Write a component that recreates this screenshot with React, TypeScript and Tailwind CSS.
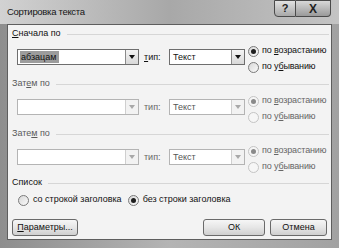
import React from "react";

function Combo({
  width,
  value,
  selected,
  disabled,
}: {
  width: string;
  value?: string;
  selected?: boolean;
  disabled?: boolean;
}) {
  return (
    <div
      className={`${width} h-[16px] flex items-stretch border ${
        disabled ? "border-[#b4b4b4]" : "border-[#6e6e6e]"
      } bg-white`}
    >
      <div className="flex-1 flex items-center pl-[2px] overflow-hidden">
        {value && (
          <span
            className={`leading-[12px] px-[1px] ${
              selected ? "bg-[#9c9c9c] text-[#111] pr-[3px]" : disabled ? "text-[#555]" : "text-[#111]"
            }`}
          >
            {value}
          </span>
        )}
      </div>
      <div
        className={`w-[13px] flex items-center justify-center border-l ${
          disabled
            ? "border-[#cfcfcf] bg-[#f2f2f2]"
            : "border-[#8a8a8a] bg-gradient-to-b from-[#f4f4f4] to-[#d8d8d8]"
        }`}
      >
        <span
          className={`w-0 h-0 border-l-[3px] border-r-[3px] border-t-[4px] border-l-transparent border-r-transparent ${
            disabled ? "border-t-[#a8a8a8]" : "border-t-[#111]"
          }`}
        />
      </div>
    </div>
  );
}

function Radio({ checked, disabled }: { checked?: boolean; disabled?: boolean }) {
  return (
    <span
      className={`shrink-0 w-[11px] h-[11px] rounded-full border flex items-center justify-center ${
        disabled ? "border-[#c4c4c4] bg-[#f6f6f6]" : "border-[#7a7a7a] bg-gradient-to-br from-[#d8d8d8] to-[#fafafa]"
      }`}
    >
      {checked && (
        <span
          className={`w-[5px] h-[5px] rounded-full ${disabled ? "bg-[#8a8a8a]" : "bg-[#1e1e1e]"}`}
        />
      )}
    </span>
  );
}

function SectionLabel({ children, disabled }: { children: React.ReactNode; disabled?: boolean }) {
  return (
    <div className="flex items-center h-[14px] pl-[4px] pr-[2px]">
      <span className={`whitespace-nowrap ${disabled ? "text-[#5a5a5a]" : "text-[#111]"}`}>{children}</span>
      <div className="flex-1 ml-[6px] h-px bg-[#d6d6d6]" />
    </div>
  );
}

function SortRow({
  first,
  value,
  disabled,
}: {
  first: React.ReactNode;
  value?: string;
  disabled?: boolean;
}) {
  const txt = disabled ? "text-[#666]" : "text-[#111]";
  return (
    <div className="flex items-start h-[36px]">
      <div className="mt-[8px] ml-[9px]">
        <Combo width="w-[122px]" value={value} selected={!!value} disabled={disabled} />
      </div>
      <span className={`mt-[10px] ml-[5px] w-[25px] ${txt}`}>{first}</span>
      <div className="mt-[8px]">
        <Combo width="w-[76px]" value="Текст" disabled={disabled} />
      </div>
      <div className="ml-[3px] mt-[2px] flex flex-col whitespace-nowrap tracking-[-0.15px]">
        <div className="flex items-center h-[16px] gap-[3px]">
          <Radio checked disabled={disabled} />
          <span className={txt}>
            по <span className="underline">в</span>озрастанию
          </span>
        </div>
        <div className="flex items-center h-[16px] gap-[3px]">
          <Radio disabled={disabled} />
          <span className={txt}>
            по у<span className="underline">б</span>ыванию
          </span>
        </div>
      </div>
    </div>
  );
}

function Button({ width, children }: { width: string; children: React.ReactNode }) {
  return (
    <button
      className={`${width} h-[17px] rounded-[3px] border border-[#6a6a6a] bg-gradient-to-b from-[#f6f6f6] via-[#e6e6e6] to-[#cfcfcf] text-[#111] flex items-center justify-center leading-none whitespace-nowrap`}
    >
      {children}
    </button>
  );
}

export default function App() {
  return (
    <div className="w-[339px] h-[248px] flex flex-col bg-gradient-to-r from-[#8e8e8e] via-[#b4b4b4] to-[#a2a2a2] font-['Liberation_Sans',sans-serif] text-[9px] overflow-hidden">
      {/* Title bar */}
      <div className="relative h-[24px] flex items-center pl-[7px] bg-gradient-to-r from-[#d2d2d2] via-[#a8a8a8] to-[#c4c4c4]">
        <span className="text-[9.5px] tracking-[-0.3px] text-[#151515] mt-[1px]">Сортировка текста</span>
        <div className="absolute top-0 right-[8px] flex">
          <div className="w-[22px] h-[17px] border border-[#4a4a4a] rounded-bl-[4px] bg-gradient-to-b from-[#e2e2e2] to-[#a8a8a8] flex items-center justify-center text-[11px] font-bold text-[#222]">
            ?
          </div>
          <div className="w-[35px] h-[17px] border border-l-0 border-[#4a4a4a] rounded-br-[4px] bg-gradient-to-b from-[#d8d8d8] to-[#9a9a9a] flex items-center justify-center text-[12px] font-bold text-[#222]">
            X
          </div>
        </div>
      </div>

      {/* Client area */}
      <div className="mx-[7px] h-[216px] border border-[#5e5e5e] bg-[#f3f3f3] flex flex-col">
        <div className="mt-[2px]">
          <SectionLabel>
            <span className="underline">С</span>начала по
          </SectionLabel>
        </div>
        <SortRow
          value="абзацам"
          first={
            <>
              <span className="underline">т</span>ип:
            </>
          }
        />
        <SectionLabel disabled>
          Зат<span className="underline">е</span>м по
        </SectionLabel>
        <SortRow disabled first="тип:" />
        <SectionLabel disabled>
          Зате<span className="underline">м</span> по
        </SectionLabel>
        <SortRow disabled first="тип:" />

        <div className="mt-[-1px]">
          <SectionLabel>Список</SectionLabel>
        </div>
        <div className="flex items-center h-[16px] mt-[2px] ml-[10px] text-[#111] whitespace-nowrap">
          <Radio />
          <span className="ml-[4px]">со строкой заголовка</span>
          <div className="ml-[6px]">
            <Radio checked />
          </div>
          <span className="ml-[4px]">без строки заголовка</span>
        </div>

        <div className="flex items-center mt-[11px] ml-[4px]">
          <Button width="w-[66px]">
            <span>
              <span className="underline">П</span>араметры...
            </span>
          </Button>
          <div className="flex-1" />
          <Button width="w-[62px]">ОК</Button>
          <div className="w-[5px]" />
          <Button width="w-[57px]">Отмена</Button>
          <div className="w-[4px]" />
        </div>
      </div>
    </div>
  );
}
